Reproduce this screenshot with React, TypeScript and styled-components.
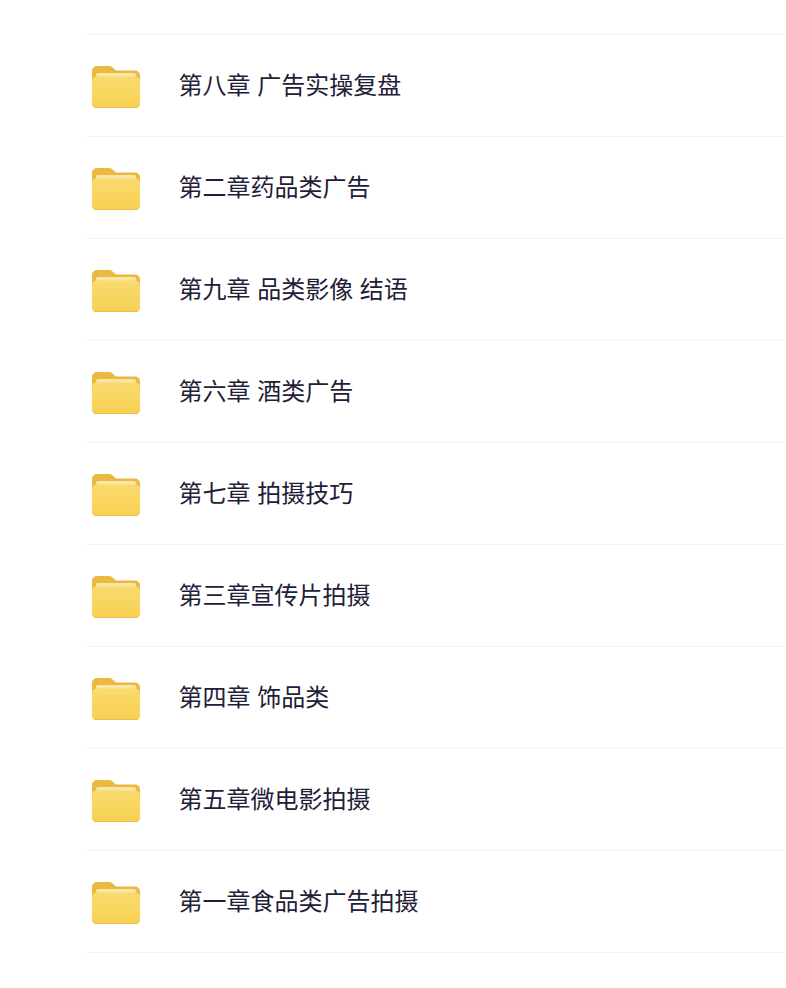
import React from 'react';
import styled, { createGlobalStyle } from 'styled-components';

const GlobalStyle = createGlobalStyle`
  html, body {
    margin: 0;
    padding: 0;
    background: #fff;
    overflow: hidden;
  }
`;

const folders = [
  '第八章 广告实操复盘',
  '第二章药品类广告',
  '第九章 品类影像 结语',
  '第六章 酒类广告',
  '第七章 拍摄技巧',
  '第三章宣传片拍摄',
  '第四章 饰品类',
  '第五章微电影拍摄',
  '第一章食品类广告拍摄',
];

const FolderIcon: React.FC = () => (
  <svg width="48" height="42" viewBox="0 0 48 42">
    <defs>
      <linearGradient id="folderFront" x1="0" y1="0" x2="0" y2="1">
        <stop offset="0" stopColor="#f9db6e" />
        <stop offset="1" stopColor="#f7d052" />
      </linearGradient>
    </defs>
    <path
      d="M0 5a5 5 0 0 1 5-5h11.500c2 0 3.200.6 4.600 1.900L24 4.500h19a5 5 0 0 1 5 5V20H0z"
      fill="#ebb840"
    />
    <rect x="4" y="7" width="40" height="5" rx="2" fill="#f8e7a4" />
    <rect x="0" y="10.500" width="48" height="31.500" rx="4.500" fill="url(#folderFront)" />
    <path d="M0 37.500a4.500 4.500 0 0 0 4.500 4.500h39a4.500 4.500 0 0 0 4.500-4.500v-.5a4 4 0 0 1-4 4H4a4 4 0 0 1-4-4z" fill="#ebbc4a" />
  </svg>
);

const Page = styled.div`
  width: 786px;
  height: 988px;
  padding: 34px 0 0 84px;
  box-sizing: border-box;
  background: #fff;
  overflow: hidden;
`;

const List = styled.ul`
  list-style: none;
  margin: 0;
  padding: 0;
  border-top: 1px solid #f5f5f5;
`;

const Row = styled.li`
  height: 101px;
  display: flex;
  align-items: center;
  gap: 39px;
  padding-left: 8px;
  border-bottom: 1px solid #f5f5f5;
`;

const Name = styled.span`
  font-family: "Liberation Sans", "Noto Sans CJK SC", sans-serif;
  font-size: 24px;
  line-height: 32px;
  color: #1f2038;
  white-space: pre;
  margin-left: -0.5px;
`;

const Icon = styled.span`
  display: flex;
  position: relative;
  top: 1px;
`;

export default function App() {
  return (
    <Page>
      <GlobalStyle />
      <List>
        {folders.map((name) => (
          <Row key={name}>
            <Icon>
              <FolderIcon />
            </Icon>
            <Name>{name}</Name>
          </Row>
        ))}
      </List>
    </Page>
  );
}
